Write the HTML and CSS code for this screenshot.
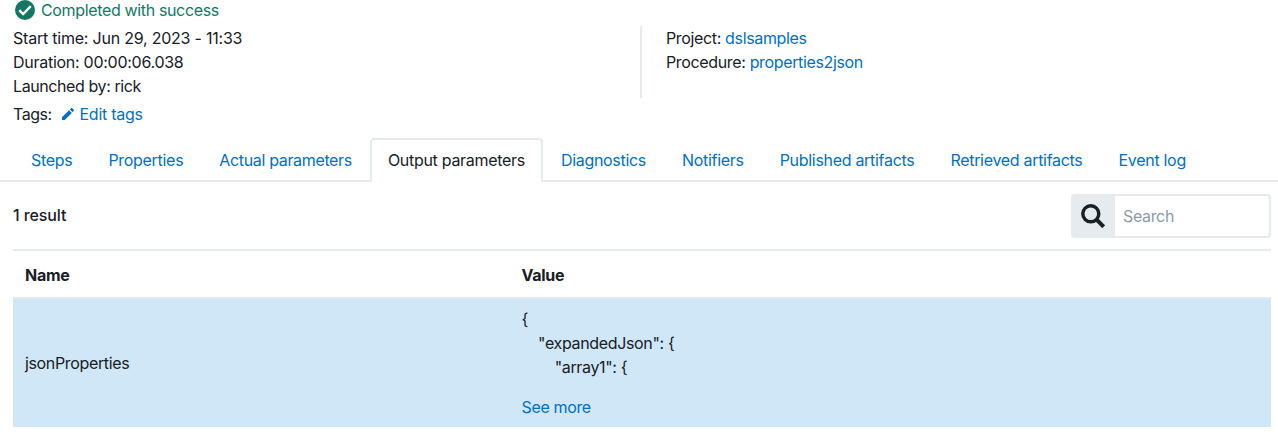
FILE: index.html
```
<!DOCTYPE html>
<html lang="en">
<head>
<meta charset="utf-8">
<title>Job details</title>
<link rel="stylesheet" href="styles.css">
</head>
<body>
<header class="summary">
  <div class="status">
    <svg class="status-icon" viewBox="0 0 20 20"><circle cx="10" cy="10" r="10" fill="#137863"/><path d="M4.3 10.2l3.8 3.8 7.7-7.8" fill="none" stroke="#fff" stroke-width="2.4"/></svg>
    <span>Completed with success</span>
  </div>
  <div class="details">
    <div class="times">
      <div class="start">Start time: Jun 29, 2023 - 11:33</div>
      <div class="duration">Duration: 00:00:06.038</div>
      <div class="launcher">Launched by: rick</div>
    </div>
    <div class="origin">
      <div>Project: <a>dslsamples</a></div>
      <div>Procedure: <a>properties2json</a></div>
    </div>
  </div>
  <div class="tags">
    <span class="tags-label">Tags:</span>
    <a class="edit"><svg class="pencil" viewBox="0 0 12 12"><path d="M0 12V9.3L7.1 2.2l2.7 2.7L2.7 12zM7.9 1.4L9 .3q.6-.5 1.2 0l1.5 1.5q.6.6 0 1.2l-1.1 1.1z" fill="currentColor"/></svg><span>Edit tags</span></a>
  </div>
</header>
<nav class="tabs">
  <a class="tab">Steps</a>
  <a class="tab">Properties</a>
  <a class="tab">Actual parameters</a>
  <a class="tab active">Output parameters</a>
  <a class="tab">Diagnostics</a>
  <a class="tab">Notifiers</a>
  <a class="tab">Published artifacts</a>
  <a class="tab">Retrieved artifacts</a>
  <a class="tab">Event log</a>
</nav>
<div class="toolbar">
  <span class="count">1 result</span>
  <label class="search">
    <span class="search-button"><svg class="search-icon" viewBox="0 0 24 24" fill="none" stroke="#182026"><circle cx="9.8" cy="9.8" r="8" stroke-width="3.4"/><path d="M15.5 15.5l7.2 7.2" stroke-width="4"/></svg></span>
    <span class="search-field">Search</span>
  </label>
</div>
<main class="table">
  <div class="row head"><div>Name</div><div>Value</div></div>
  <div class="row body">
    <div class="name">jsonProperties</div>
    <div class="value"><pre class="code">{
    "expandedJson": {
        "array1": {</pre><a>See more</a></div>
  </div>
</main>
</body>
</html>
```
FILE: styles.css
```
* { box-sizing: border-box; }
body { margin: 0; font: 16px/24px Inter, sans-serif; letter-spacing: -0.35px; color: #182026; background: #fff; overflow: hidden; }
a { color: #006fc6; }
.summary { padding: 0 13px; }
.status { display: flex; align-items: center; gap: 6px; height: 26px; padding: 0 0 6px 2px; color: #137863; }
.status-icon { width: 20px; height: 20px; }
.details { display: grid; grid-template-columns: 627px 1fr; height: 72px; }
.start { letter-spacing: -0.22px; }
.duration { letter-spacing: -0.27px; }
.launcher { letter-spacing: -0.41px; }
.origin { border-left: 2px solid #e6ebef; padding-left: 24px; }
.tags { display: flex; gap: 10px; margin-top: 4px; }
.tags-label { letter-spacing: -0.5px; }
.edit { display: flex; align-items: center; gap: 6px; letter-spacing: -0.27px; }
.pencil { width: 12px; height: 12px; }
.tabs { display: flex; height: 44px; margin-top: 12px; padding-left: 13px; border-bottom: 2px solid #e6ebef; letter-spacing: -0.3px; }
.tab { height: 44px; padding: 8px 16px; border: 2px solid transparent; border-bottom: 0; line-height: 24px; white-space: nowrap; }
.tab:nth-child(3) { letter-spacing: -0.34px; }
.tab.active { color: #182026; background: #fff; border-color: #e6ebef; border-radius: 4px 4px 0 0; }
.toolbar { display: flex; justify-content: space-between; align-items: center; height: 67px; padding: 0 7px 0 13px; }
.count { padding-bottom: 2px; font-weight: 500; letter-spacing: -0.1px; }
.search { display: flex; width: 200px; height: 44px; border: 2px solid #e6ebef; border-radius: 4px; }
.search-button { display: flex; align-items: center; justify-content: center; width: 42px; padding-right: 2px; background: #e6ebef; }
.search-icon { width: 24px; height: 24px; }
.search-field { padding: 8px; color: #8a9ba8; }
.table { margin: 0 7px 0 13px; }
.row { display: grid; grid-template-columns: 496.5px 1fr; padding-left: 12px; }
.head { height: 50px; border-top: 2px solid #e6ebef; border-bottom: 2px solid #e6e9eb; line-height: 48px; font-weight: 650; letter-spacing: -0.28px; }
.body { height: 128px; background: #cfe7f6; }
.name { align-self: center; }
.value { padding-top: 8px; }
.code { margin: 0 0 16px; font: inherit; }
```
